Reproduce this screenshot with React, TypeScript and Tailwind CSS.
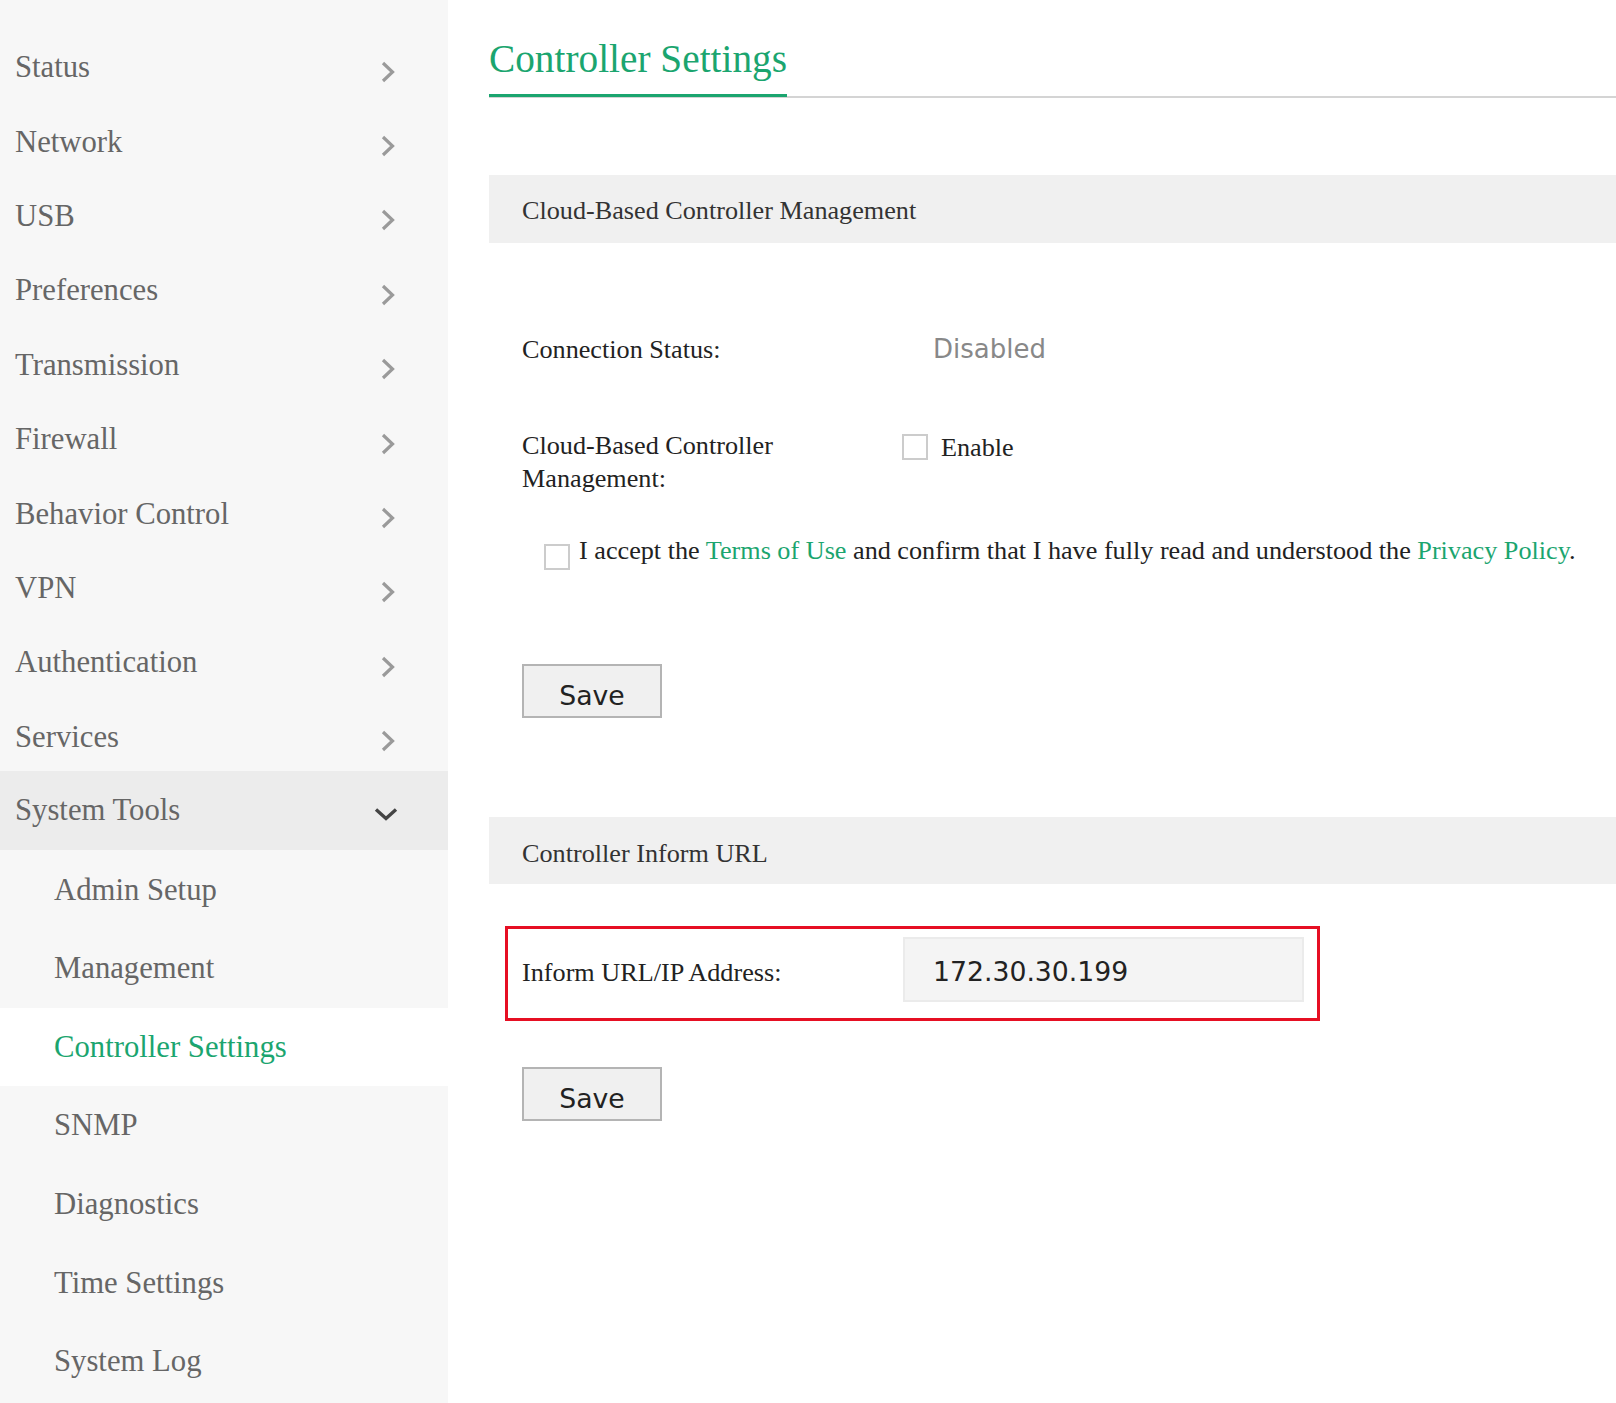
import { useState } from 'react';

const topItems = ['Status', 'Network', 'USB', 'Preferences', 'Transmission', 'Firewall', 'Behavior Control', 'VPN', 'Authentication', 'Services'];
const subItems = ['Admin Setup', 'Management', 'Controller Settings', 'SNMP', 'Diagnostics', 'Time Settings', 'System Log'];

function ChevronRight() {
  return (
    <svg width="14" height="22" viewBox="0 0 14 22" fill="none" className="mt-[9px]">
      <path d="M2 2l9.5 9L2 20" stroke="#9a9a9a" strokeWidth="3.2" />
    </svg>
  );
}

function ChevronDown() {
  return (
    <svg width="24" height="15" viewBox="0 0 24 15" fill="none" className="mt-[10px]">
      <path d="M2 2.5l10 9 10-9" stroke="#444444" strokeWidth="3.4" />
    </svg>
  );
}

function Sidebar() {
  return (
    <aside className="w-[448px] shrink-0 bg-[#f7f7f7] pt-[27.5px] text-[30.7px] text-[#666666]">
      {topItems.map((item) => (
        <div key={item} className="flex h-[74.4px] items-center justify-between pl-[15px] pr-[53px] pt-[5px]">
          <span>{item}</span>
          <ChevronRight />
        </div>
      ))}
      <div className="flex h-[79px] items-center justify-between bg-[#ececec] pb-[2px] pl-[15px] pr-[50px]">
        <span>System Tools</span>
        <ChevronDown />
      </div>
      {subItems.map((item) => (
        <div
          key={item}
          className={
            item === 'Controller Settings'
              ? 'flex h-[78.6px] items-center bg-white pl-[54px] text-[#1ba56f]'
              : 'flex h-[78.6px] items-center pl-[54px]'
          }
        >
          {item}
        </div>
      ))}
    </aside>
  );
}

function Checkbox({ className }: { className: string }) {
  const [checked, setChecked] = useState(false);
  return (
    <input
      type="checkbox"
      checked={checked}
      onChange={() => setChecked(!checked)}
      className={`h-[26px] w-[26px] shrink-0 appearance-none border-2 border-[#cccccc] bg-white ${className}`}
    />
  );
}

function SaveButton() {
  return (
    <button className="block h-[54px] w-[140px] border-2 border-[#b4b4b4] bg-[#f0f0f0] pt-[9px] font-['DejaVu_Sans',sans-serif] text-[26.7px] leading-[30px] text-[#222222]">
      Save
    </button>
  );
}

export default function App() {
  return (
    <div className="flex h-[1403px] overflow-hidden bg-white font-['Liberation_Serif',serif]">
      <Sidebar />
      <main className="min-w-0 flex-1 pl-[41px] text-[26.2px] text-[#222222]">
        <div className="h-[98px] border-b-2 border-[#d4d4d4]">
          <h1 className="inline-block h-[97px] border-b-[3px] border-[#1ba56f] pt-[34px] text-[39.3px] leading-[50px] text-[#1ba56f]">
            Controller Settings
          </h1>
        </div>

        <div className="mt-[77px] flex h-[68px] items-center bg-[#f0f0f0] pl-[33px] pt-[3px] text-[#333333]">
          Cloud-Based Controller Management
        </div>

        <div className="mt-[89px] flex h-[34px] items-center pl-[33px]">
          <span className="mt-[2px] w-[411px]">Connection Status:</span>
          <span className="font-['DejaVu_Sans',sans-serif] text-[26px] text-[#888888]">Disabled</span>
        </div>

        <div className="mt-[64px] flex pl-[33px]">
          <div className="-mt-[1px] w-[380px] leading-[33px]">
            Cloud-Based Controller
            <br />
            Management:
          </div>
          <Checkbox className="mt-[4px]" />
          <span className="ml-[13px] mt-[1px] leading-[33px]">Enable</span>
        </div>

        <div className="mt-[39px] flex pl-[55px]">
          <Checkbox className="mt-[10px]" />
          <p className="ml-[9px] whitespace-nowrap leading-[33px]">
            I accept the <a className="text-[#1ba56f]">Terms of Use</a> and confirm that I have fully read and understood the{' '}
            <a className="text-[#1ba56f]">Privacy Policy</a>.
          </p>
        </div>

        <div className="mt-[94px] pl-[33px]">
          <SaveButton />
        </div>

        <div className="mt-[99px] flex h-[67px] items-center bg-[#f0f0f0] pl-[33px] pt-[7px] text-[#333333]">
          Controller Inform URL
        </div>

        <div className="ml-[16px] mt-[42px] flex h-[95px] w-[815px] items-start border-[3px] border-[#e60f23] pl-[14px] pr-[13px] pt-[8px]">
          <span className="mt-[16px] w-[381px]">Inform URL/IP Address:</span>
          <div className="flex h-[65px] flex-1 items-center border-2 border-[#ebebeb] bg-[#f4f4f4] pl-[28px] pt-[6px] font-['DejaVu_Sans',sans-serif] text-[26.7px] text-[#222222]">
            172.30.30.199
          </div>
        </div>

        <div className="mt-[46px] pl-[33px]">
          <SaveButton />
        </div>
      </main>
    </div>
  );
}
